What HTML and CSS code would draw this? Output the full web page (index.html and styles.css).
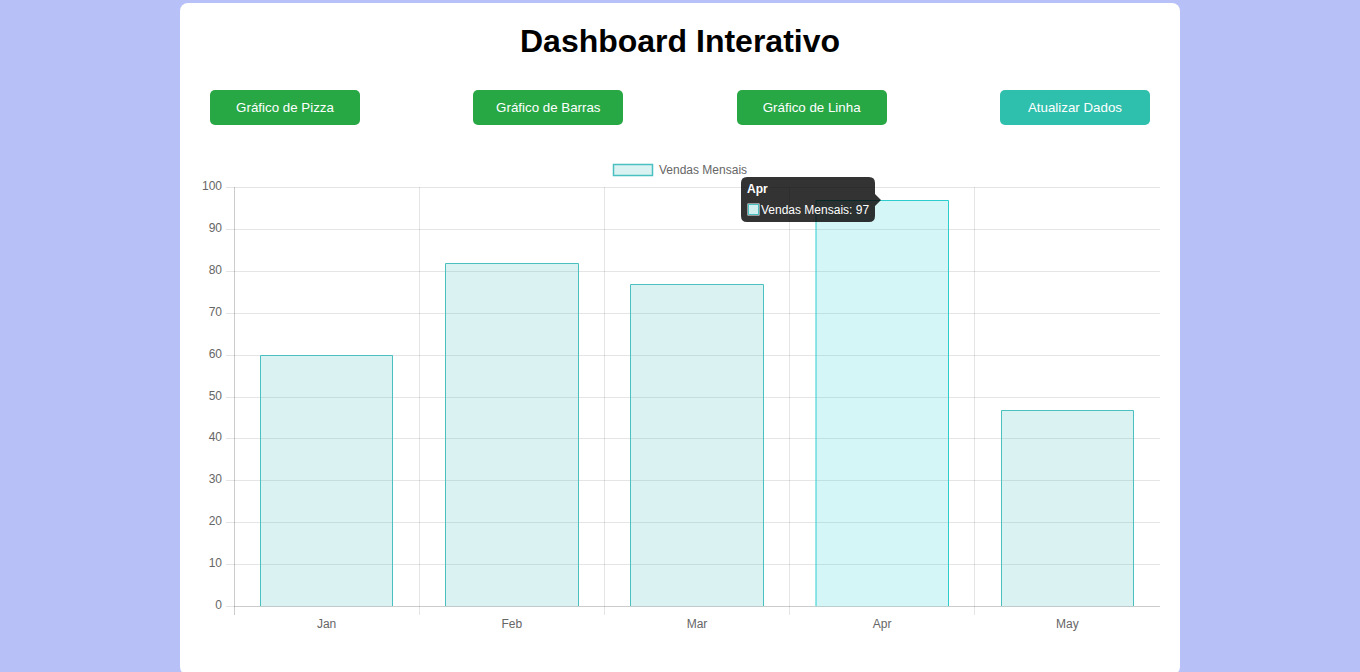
FILE: index.html
```html
<!DOCTYPE html>
<html lang="pt">
<head>
<meta charset="utf-8">
<title>Dashboard Interativo</title>
<link rel="stylesheet" href="styles.css">
</head>
<body>
<div class="card">
  <h1 class="title">Dashboard Interativo</h1>
  <div class="buttons">
    <button class="btn btn-green">Gráfico de Pizza</button>
    <button class="btn btn-green">Gráfico de Barras</button>
    <button class="btn btn-green">Gráfico de Linha</button>
    <button class="btn btn-teal">Atualizar Dados</button>
  </div>
  <svg class="chart" width="960" height="505" viewBox="200 150 960 505" xmlns="http://www.w3.org/2000/svg">
    <!-- legend -->
    <rect x="613.5" y="164.5" width="39" height="11" fill="rgba(75,192,192,0.2)" stroke="rgb(75,192,192)" stroke-width="1.5"/>
    <text class="lbl" x="659" y="174">Vendas Mensais</text>

    <!-- horizontal grid -->
    <g stroke="rgba(0,0,0,0.1)" stroke-width="1">
      <line x1="226" y1="187.5" x2="1160" y2="187.5"/>
      <line x1="226" y1="229.5" x2="1160" y2="229.5"/>
      <line x1="226" y1="271.5" x2="1160" y2="271.5"/>
      <line x1="226" y1="313.5" x2="1160" y2="313.5"/>
      <line x1="226" y1="355.5" x2="1160" y2="355.5"/>
      <line x1="226" y1="397.5" x2="1160" y2="397.5"/>
      <line x1="226" y1="438.5" x2="1160" y2="438.5"/>
      <line x1="226" y1="480.5" x2="1160" y2="480.5"/>
      <line x1="226" y1="522.5" x2="1160" y2="522.5"/>
      <line x1="226" y1="564.5" x2="1160" y2="564.5"/>
      <line x1="226" y1="606.5" x2="234" y2="606.5"/>
      <!-- vertical grid -->
      <line x1="419.5" y1="187" x2="419.5" y2="615"/>
      <line x1="604.5" y1="187" x2="604.5" y2="615"/>
      <line x1="789.5" y1="187" x2="789.5" y2="615"/>
      <line x1="974.5" y1="187" x2="974.5" y2="615"/>
    </g>
    <!-- axes -->
    <line x1="234.5" y1="187" x2="234.5" y2="615" stroke="rgba(0,0,0,0.2)"/>
    <line x1="234" y1="606.5" x2="1160" y2="606.5" stroke="rgba(0,0,0,0.2)"/>

    <!-- y labels -->
    <g class="lbl" text-anchor="end">
      <text x="222" y="190">100</text>
      <text x="222" y="232">90</text>
      <text x="222" y="274">80</text>
      <text x="222" y="316">70</text>
      <text x="222" y="358">60</text>
      <text x="222" y="400">50</text>
      <text x="222" y="441">40</text>
      <text x="222" y="483">30</text>
      <text x="222" y="525">20</text>
      <text x="222" y="567">10</text>
      <text x="222" y="609">0</text>
    </g>
    <!-- x labels -->
    <g class="lbl" text-anchor="middle">
      <text x="326.6" y="628">Jan</text>
      <text x="511.8" y="628">Feb</text>
      <text x="697" y="628">Mar</text>
      <text x="882.2" y="628">Apr</text>
      <text x="1067.4" y="628">May</text>
    </g>

    <!-- bars -->
    <g fill="rgba(75,192,192,0.2)" stroke="rgb(75,192,192)" stroke-width="1">
      <rect x="260.5" y="355.5" width="132" height="251" stroke="none"/>
      <path d="M260.5 606 V355.5 H392.5 V606" fill="none"/>
      <rect x="445.5" y="263.5" width="133" height="343" stroke="none"/>
      <path d="M445.5 606 V263.5 H578.5 V606" fill="none"/>
      <rect x="630.5" y="284.5" width="133" height="322" stroke="none"/>
      <path d="M630.5 606 V284.5 H763.5 V606" fill="none"/>
      <rect x="1001.5" y="410.5" width="132" height="196" stroke="none"/>
      <path d="M1001.5 606 V410.5 H1133.5 V606" fill="none"/>
    </g>
    <g>
      <rect x="816" y="200.5" width="133" height="406" fill="rgba(40,210,210,0.2)"/>
      <path d="M816 606 V200.5 H948.5 V606" fill="none" stroke="rgb(45,205,205)" stroke-width="1"/>
    </g>

    <!-- tooltip -->
    <path d="M747 177 H869 Q875 177 875 183 V194 L881 200 L875 206 V216 Q875 222 869 222 H747 Q741 222 741 216 V183 Q741 177 747 177 Z" fill="rgba(0,0,0,0.8)"/>
    <text class="tip tip-title" x="747" y="193">Apr</text>
    <rect x="747.5" y="203.5" width="12" height="12" fill="#fff"/>
    <rect x="748.5" y="204.5" width="10" height="10" fill="rgba(75,192,192,0.25)" stroke="rgb(75,192,192)" stroke-width="1"/>
    <text class="tip" x="761" y="214">Vendas Mensais: 97</text>
  </svg>
</div>
</body>
</html>
```

FILE: styles.css
```css
html, body {
  margin: 0;
  padding: 0;
}

body {
  background: #b8c1f7;
  font-family: "Liberation Sans", Arial, sans-serif;
  overflow: hidden;
}

.card {
  width: 1000px;
  box-sizing: border-box;
  margin: 3px auto 0;
  padding: 20px 20px 20px;
  background: #ffffff;
  border-radius: 8px;
}

.title {
  margin: 0;
  font-size: 32px;
  line-height: 37px;
  font-weight: bold;
  text-align: center;
  color: #000;
}

.buttons {
  display: flex;
  justify-content: space-between;
  padding: 0 10px;
  margin-top: 30px;
}

.btn {
  width: 150px;
  height: 35px;
  border: none;
  border-radius: 5px;
  color: #fff;
  font-family: "Liberation Sans", Arial, sans-serif;
  font-size: 13.333px;
  cursor: pointer;
}

.btn-green {
  background: #28a745;
}

.btn-teal {
  background: #2fbfad;
}

.chart {
  display: block;
  margin-top: 25px;
}

.lbl {
  font-family: "Liberation Sans", Arial, sans-serif;
  font-size: 12px;
  fill: #666;
}

.tip {
  font-family: "Liberation Sans", Arial, sans-serif;
  font-size: 12px;
  fill: #fff;
}

.tip-title {
  font-weight: bold;
}
```
